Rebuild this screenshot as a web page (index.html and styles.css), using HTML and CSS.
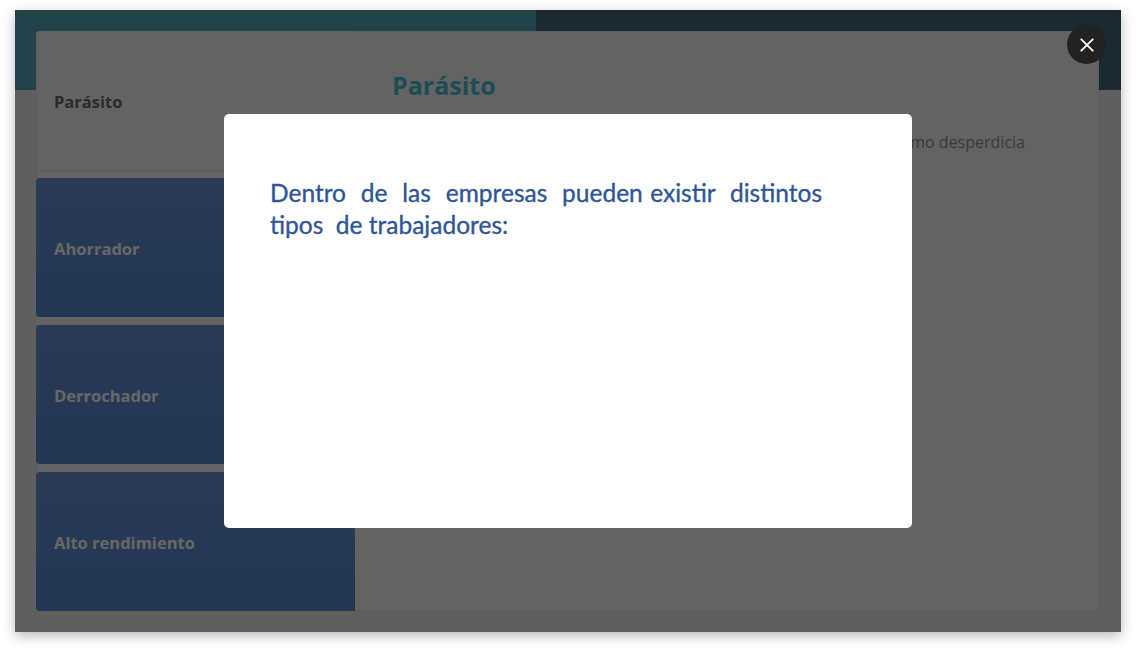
FILE: index.html
```html
<!DOCTYPE html>
<html lang="es">
<head>
<meta charset="utf-8">
<title>Tipos de trabajadores</title>
<link rel="stylesheet" href="styles.css">
</head>
<body>
<div class="frame">
  <div class="app">
    <div class="header">
      <div class="header-left"></div>
      <div class="header-right"></div>
    </div>
    <div class="main">
      <div class="card">
        <div class="tabs">
          <div class="tab tab-active">Parásito</div>
          <div class="tab tab-blue">Ahorrador</div>
          <div class="tab tab-blue">Derrochador</div>
          <div class="tab tab-blue">Alto rendimiento</div>
        </div>
        <div class="panel">
          <h2 class="panel-title">Parásito</h2>
          <p class="panel-text">Es aquel trabajador que vive a costa del esfuerzo de los otros y asimismo desperdicia los recursos de la empresa.</p>
        </div>
      </div>
    </div>
  </div>
  <div class="overlay">
    <div class="modal">
      <p class="modal-text">Dentro&nbsp; de&nbsp; las&nbsp; empresas&nbsp; pueden existir&nbsp; distintos tipos&nbsp; de trabajadores:</p>
    </div>
  </div>
  <button class="close" aria-label="Cerrar">
    <svg width="16" height="16" viewBox="0 0 16 16"><path d="M1.5 1.5 L14.5 14.5 M14.5 1.5 L1.5 14.5" stroke="#fff" stroke-width="2.1" stroke-linecap="round"/></svg>
  </button>
</div>
</body>
</html>
```
FILE: styles.css
```css
* { box-sizing: border-box; }
html, body { margin: 0; padding: 0; background: #ffffff; }
body { padding: 10px 15px 20px 15px; font-family: "Open Sans", "Noto Sans", sans-serif; }

.frame {
  position: relative;
  width: 1106px;
  height: 622px;
  overflow: hidden;
  box-shadow: 0 4px 12px rgba(0,0,0,0.28);
  background: #eeeeee;
}

.app { display: flex; flex-direction: column; height: 100%; }

.header { display: flex; height: 80px; flex: none; }
.header-left { width: 521px; background: #58a8b9; }
.header-right { flex: 1; background: #426a78; }

.main {
  flex: 1;
  display: flex;
  padding: 0 22px 21px 21px;
  margin-top: -59px;
}

.card {
  flex: 1;
  display: flex;
  background: #f8f8f8;
  border: 1px solid #e8e8e8;
  border-radius: 4px;
}

.tabs {
  width: 319px;
  flex: none;
  display: flex;
  flex-direction: column;
  gap: 8px;
  margin: -1px 0 -1px -1px;
}

.tab {
  flex: 1 1 0;
  display: flex;
  align-items: center;
  padding: 2px 18px 0 18px;
  font-size: 16.5px;
  font-weight: 700;
  border-radius: 4px 0 0 4px;
}
.tab-active {
  background: #f8f8f8;
  border-left: 1px solid #e8e8e8;
  box-shadow: 0 2px 2px -1px rgba(0,0,0,0.14);
  color: #6c6c6c;
  padding-left: 17px;
}
.tab-blue {
  background: linear-gradient(#6c92d6, #5a89d5);
  color: #ffffff;
}

.panel { flex: 1; padding: 36px 36px 0 37px; }
.panel-title {
  margin: 0;
  font-size: 25px;
  font-weight: 700;
  color: #4bbed7;
  line-height: 34px;
}
.panel-text {
  margin: 26px 0 0 0;
  max-width: 646px;
  font-size: 16px;
  line-height: 28px;
  color: #949494;
}

.overlay {
  position: absolute;
  inset: 0;
  background: rgba(0,0,0,0.6);
  display: flex;
  align-items: center;
  justify-content: center;
}

.modal {
  width: 688px;
  height: 414px;
  background: #ffffff;
  border-radius: 5px;
  padding: 63px 90px 0 46px;
}
.modal-text {
  margin: 0;
  font-family: Lato, "Open Sans", sans-serif;
  font-size: 24.5px;
  line-height: 32px;
  color: #2f5597;
  text-align: justify;
  -webkit-text-stroke: 0.35px #2f5597;
}

.close {
  position: absolute;
  top: 15px;
  right: 15px;
  width: 39px;
  height: 39px;
  border-radius: 50%;
  border: 0;
  padding: 0;
  background: #222222;
  display: flex;
  align-items: center;
  justify-content: center;
  cursor: pointer;
}
.close svg { width: 14px; height: 14px; }
```
